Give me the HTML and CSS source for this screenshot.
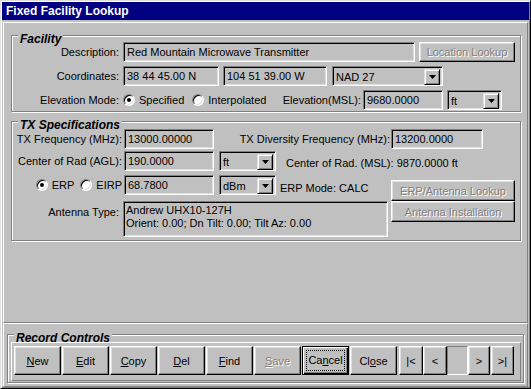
FILE: index.html
```html
<!DOCTYPE html>
<html lang="en">
<head>
  <meta charset="UTF-8">
  <meta name="viewport" content="width=device-width, initial-scale=1.0">
  <title>Fixed Facility Lookup</title>
  <link rel="stylesheet" href="styles.css">
</head>
<body>
  <div class="window">
    <div class="titlebar">Fixed Facility Lookup</div>
    <div class="client">
      <div class="panel panel-main">
        <!-- Facility -->
        <div class="group group-facility">
          <div class="legend">Facility</div>
          <div class="row">
            <span class="lbl lbl-fac">Description:</span>
            <div class="field w-desc">Red Mountain Microwave Transmitter</div>
            <button class="btn btn-location" disabled>Location Lookup</button>
          </div>
          <div class="row">
            <span class="lbl lbl-fac">Coordinates:</span>
            <div class="field w-lat">38 44 45.00 N</div>
            <div class="field w-lon">104 51 39.00 W</div>
            <div class="combo w-datum">
              <span class="combo-text">NAD 27</span>
              <span class="drop"><svg width="7" height="4" viewBox="0 0 7 4"><polygon points="0,0 7,0 3.5,4" fill="#000"/></svg></span>
            </div>
          </div>
          <div class="row">
            <span class="lbl lbl-fac">Elevation Mode:</span>
            <div class="elev-mode">
              <span class="radio-wrap"><span class="radio checked"></span>Specified</span>
              <span class="radio-wrap"><span class="radio"></span>Interpolated</span>
              <span class="lbl lbl-msl">Elevation(MSL):</span>
            </div>
            <div class="field w-elev">9680.0000</div>
            <div class="combo w-unit-elev">
              <span class="combo-text">ft</span>
              <span class="drop"><svg width="7" height="4" viewBox="0 0 7 4"><polygon points="0,0 7,0 3.5,4" fill="#000"/></svg></span>
            </div>
          </div>
        </div>

        <!-- TX Specifications -->
        <div class="group group-tx">
          <div class="legend">TX Specifications</div>
          <div class="row row-first">
            <span class="lbl lbl-tx">TX Frequency (MHz):</span>
            <div class="field w-tx">13000.00000</div>
            <span class="lbl lbl-div">TX Diversity Frequency (MHz):</span>
            <div class="field w-div">13200.0000</div>
          </div>
          <div class="row row-agl">
            <span class="lbl lbl-tx">Center of Rad (AGL):</span>
            <div class="field w-tx">190.0000</div>
            <div class="combo w-unit">
              <span class="combo-text">ft</span>
              <span class="drop"><svg width="7" height="4" viewBox="0 0 7 4"><polygon points="0,0 7,0 3.5,4" fill="#000"/></svg></span>
            </div>
            <span class="note note-msl">Center of Rad. (MSL): 9870.0000 ft</span>
          </div>
          <div class="tx-bottom">
            <div class="tx-left">
              <div class="row row-erp">
                <div class="erp-radios">
                  <span class="radio-wrap"><span class="radio checked"></span>ERP</span>
                  <span class="radio-wrap"><span class="radio"></span>EIRP</span>
                </div>
                <div class="field w-tx">68.7800</div>
                <div class="combo w-unit">
                  <span class="combo-text">dBm</span>
                  <span class="drop"><svg width="7" height="4" viewBox="0 0 7 4"><polygon points="0,0 7,0 3.5,4" fill="#000"/></svg></span>
                </div>
                <span class="note note-mode">ERP Mode: CALC</span>
              </div>
              <div class="row row-antenna">
                <span class="lbl lbl-fac lbl-top">Antenna Type:</span>
                <div class="field field-multi w-antenna">
                  <div>Andrew UHX10-127H</div>
                  <div>Orient: 0.00; Dn Tilt: 0.00; Tilt Az: 0.00</div>
                </div>
              </div>
            </div>
            <div class="tx-buttons">
              <button class="btn btn-wide" disabled>ERP/Antenna Lookup</button>
              <button class="btn btn-wide" disabled>Antenna Installation</button>
            </div>
          </div>
        </div>
      </div>

      <div class="panel panel-records">
        <div class="group group-records">
          <div class="legend">Record Controls</div>
          <div class="button-bar">
            <button class="btn btn-rec"><u>N</u>ew</button>
            <button class="btn btn-rec"><u>E</u>dit</button>
            <button class="btn btn-rec"><u>C</u>opy</button>
            <button class="btn btn-rec"><u>D</u>el</button>
            <button class="btn btn-rec"><u>F</u>ind</button>
            <button class="btn btn-rec" disabled><u>S</u>ave</button>
            <button class="btn btn-rec btn-default"><span class="focus">Ca<u>n</u>cel</span></button>
            <button class="btn btn-rec">Cl<u>o</u>se</button>
            <button class="btn btn-nav nav-first">|&lt;</button>
            <button class="btn btn-nav">&lt;</button>
            <div class="record-pos"></div>
            <button class="btn btn-nav nav-next">&gt;</button>
            <button class="btn btn-nav nav-last">&gt;|</button>
          </div>
        </div>
      </div>
    </div>
  </div>
</body>
</html>
```

FILE: styles.css
```css
/* General */
* {
  box-sizing: border-box;
}
body {
  margin: 0;
  padding: 0;
  background: #c0c0c0;
  font-family: 'Liberation Sans', Arial, sans-serif;
  font-size: 11px;
  color: #000;
}
.window {
  width: 531px;
  height: 389px;
  border: 1px solid;
  border-color: #dfdfdf #000 #000 #dfdfdf;
  box-shadow: inset 1px 1px #fff, inset -1px -1px #808080;
  padding: 1px;
  background: #c0c0c0;
}
.titlebar {
  height: 18px;
  line-height: 18px;
  padding-left: 4px;
  background: #000080;
  color: #fff;
  font-weight: bold;
  font-size: 12px;
}
.client {
  padding: 0 1px;
}
/* Panels and group boxes */
.panel {
  border: 1px solid;
  border-color: #fff #808080 #808080 #fff;
}
.panel-main {
  margin-top: 2px;
  height: 301px;
  padding-top: 12px;
}
.panel-records {
  height: 64px;
  padding-top: 10px;
}
.group {
  border: 1px solid #808080;
  box-shadow: inset 1px 1px #fff, 1px 1px #fff;
}
.group-facility {
  margin-left: 7px;
  width: 510px;
  padding-bottom: 1px;
}
.group-tx {
  margin-left: 7px;
  margin-top: 9px;
  width: 510px;
  padding-bottom: 3px;
}
.group-records {
  margin-left: 3px;
  width: 517px;
  padding-bottom: 1px;
}
.legend {
  width: fit-content;
  height: 9px;
  line-height: 12px;
  margin: -3px 0 0 6px;
  padding: 0 2px;
  background: #c0c0c0;
  font-weight: bold;
  font-style: italic;
  font-size: 12px;
  position: relative;
}
/* Rows */
.row {
  display: flex;
  align-items: center;
  height: 20px;
  margin-top: 4px;
  white-space: nowrap;
}
.legend + .row {
  margin-top: 0;
}
.row-first {
  margin-top: 1px !important;
}
.row-agl {
  margin-top: 2px;
}
.row-erp {
  margin-top: 0;
}
.row-antenna {
  height: 36px;
  margin-top: 6px;
  align-items: flex-start;
}
.lbl {
  text-align: right;
  flex: none;
}
.lbl-fac {
  width: 107px;
  margin-right: 4px;
}
.lbl-top {
  padding-top: 5px;
}
.lbl-tx {
  width: 110px;
  margin-right: 2px;
}
.lbl-div {
  width: 176px;
  margin-right: 1px;
}
.lbl-msl {
  margin-left: auto;
}
.note {
  flex: none;
}
.note-msl {
  margin-left: 10px;
  padding-top: 3px;
}
.note-mode {
  margin-left: 4px;
  padding-top: 5px;
}
/* Fields */
.field {
  flex: none;
  height: 20px;
  border: 1px solid;
  border-color: #808080 #fff #fff #808080;
  box-shadow: inset 1px 1px #000, inset -1px -1px #dfdfdf;
  padding: 1px 3px 0;
  line-height: 17px;
  overflow: hidden;
  white-space: nowrap;
}
.field-multi {
  height: 36px;
  line-height: 13px;
  padding: 2px 2px 0;
}
.w-desc { width: 292px; }
.w-lat { width: 96px; }
.w-lon { width: 104px; margin-left: 4px; }
.w-elev { width: 80px; margin-left: 2px; }
.w-tx { width: 90px; }
.w-div { width: 92px; }
.w-antenna { width: 265px; }
/* Combo boxes */
.combo {
  flex: none;
  display: flex;
  height: 20px;
  border: 1px solid;
  border-color: #808080 #fff #fff #808080;
  box-shadow: inset 1px 1px #000, inset -1px -1px #dfdfdf;
  padding: 2px;
}
.combo-text {
  flex: 1;
  padding: 0 1px;
  line-height: 16px;
}
.drop {
  width: 16px;
  height: 16px;
  display: flex;
  align-items: center;
  justify-content: center;
  border: 1px solid;
  border-color: #dfdfdf #000 #000 #dfdfdf;
  box-shadow: inset 1px 1px #fff, inset -1px -1px #808080;
  background: #c0c0c0;
}
.w-datum { width: 111px; margin-left: 5px; }
.w-unit-elev { width: 55px; margin-left: 4px; }
.w-unit { width: 57px; margin-left: 5px; }
/* Radios */
.elev-mode {
  width: 238px;
  display: flex;
  align-items: center;
}
.erp-radios {
  width: 110px;
  margin-right: 2px;
  display: flex;
  justify-content: flex-end;
  align-items: center;
}
.radio-wrap {
  display: flex;
  align-items: center;
  margin-right: 8px;
}
.erp-radios .radio-wrap {
  margin-right: 0;
  margin-left: 6px;
}
.radio {
  width: 12px;
  height: 12px;
  margin-right: 4px;
  border-radius: 50%;
  border: 1px solid;
  border-color: #808080 #fff #fff #808080;
  box-shadow: inset 1px 1px #000, inset -1px -1px #dfdfdf;
  background: #fff;
  display: flex;
  align-items: center;
  justify-content: center;
}
.radio.checked::after {
  content: "";
  width: 4px;
  height: 4px;
  border-radius: 50%;
  background: #000;
}
/* Buttons */
.btn {
  flex: none;
  font-family: 'Liberation Sans', Arial, sans-serif;
  font-size: 11px;
  color: #000;
  background: #c0c0c0;
  border: 1px solid;
  border-color: #fff #000 #000 #fff;
  box-shadow: inset -1px -1px #808080, inset 1px 1px #dfdfdf;
  padding: 0;
  margin: 0;
  white-space: nowrap;
}
.btn:disabled {
  color: #808080;
  text-shadow: 1px 1px #fff;
}
.btn-location {
  width: 96px;
  height: 20px;
  margin-left: 4px;
}
.tx-bottom {
  display: flex;
  margin-top: 4px;
}
.tx-left {
  width: 376px;
}
.tx-buttons {
  margin-left: 3px;
  padding-top: 5px;
  display: flex;
  flex-direction: column;
}
.btn-wide {
  width: 124px;
  height: 21px;
}
/* Record controls */
.button-bar {
  display: flex;
  margin: 1px 0 0 3px;
  width: 510px;
  height: 39px;
  padding: 3px 2px 0;
  border: 1px solid;
  border-color: #fff #808080 #808080 #fff;
}
.btn-rec {
  width: 47px;
  height: 29px;
  margin-right: 1px;
}
.btn-default {
  border: 1px solid #000;
  box-shadow: inset 1px 1px #fff, inset -1px -1px #000, inset -2px -2px #808080;
  padding: 3px;
}
.focus {
  display: block;
  height: 100%;
  line-height: 19px;
  border: 1px dotted #000;
}
.btn-nav {
  width: 24px;
  height: 29px;
}
.nav-first {
  margin-left: 1px;
}
.nav-next {
  width: 22px;
}
.nav-last {
  width: 23px;
  margin-left: 1px;
}
.record-pos {
  width: 21px;
  height: 29px;
  border: 1px solid;
  border-color: #808080 #fff #fff #808080;
}
```
